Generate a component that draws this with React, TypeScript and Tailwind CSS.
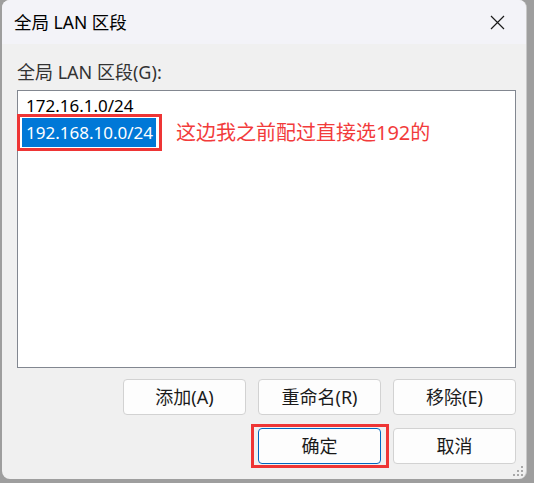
import React from "react";

const font = { fontFamily: '"Noto Sans", "Noto Sans CJK SC", sans-serif' };

function Btn({ children, primary }: { children: React.ReactNode; primary?: boolean }) {
  return (
    <div
      className={
        "w-[123px] h-[36px] flex items-center justify-center rounded-[4px] bg-[#fdfdfd] text-[18px] text-[#1a1a1a] " +
        (primary ? "border border-[#0067c0]" : "border border-[#d2d2d2]")
      }
    >
      {children}
    </div>
  );
}

export default function App() {
  return (
    <div className="w-[534px] h-[483px] bg-[#9e9e9e] overflow-hidden" style={font}>
      <div className="relative ml-[2px] w-[525px] h-[479px] rounded-[8px] overflow-hidden bg-[#f0f0f0] flex flex-col border-r border-[#c8c8c8]">
        <div className="h-[44px] shrink-0 bg-[#f3f3f8] flex items-center justify-between pl-[12px] pr-[21px]">
          <span className="text-[17.5px] text-black">全局 LAN 区段</span>
          <svg width="15" height="15" viewBox="0 0 15 15">
            <path d="M1 1 L14 14 M14 1 L1 14" stroke="#1a1a1a" strokeWidth="1.2" />
          </svg>
        </div>
        <div className="flex-1 flex flex-col pl-[15px] pr-[10px]">
          <div className="mt-[17px] text-[18px] text-[#333] leading-[23px]">全局 LAN 区段(G):</div>
          <div className="mt-[6px] h-[278px] bg-white border border-[#828790] flex flex-col pt-[3px]">
            <div className="pl-[8px] h-[24px] text-[17px] leading-[24px] text-black">172.16.1.0/24</div>
            <div className="flex items-center">
              <div className="relative ml-[4px]">
                <div className="bg-[#0078d7] text-white text-[17px] leading-[29px] h-[29px] pl-[4px] pr-[3px]">192.168.10.0/24</div>
                <div className="absolute left-[-5px] right-[-6px] top-[-4px] bottom-[-4px] border-[3px] border-[#ee3535]"></div>
              </div>
              <span className="ml-[20px] text-[20px] leading-[28px] text-[#f23b3b]">这边我之前配过直接选192的</span>
            </div>
          </div>
          <div className="mt-[11px] flex justify-end gap-[12px]">
            <Btn>添加(A)</Btn>
            <Btn>重命名(R)</Btn>
            <Btn>移除(E)</Btn>
          </div>
          <div className="mt-[13px] flex justify-end gap-[12px]">
            <div className="relative">
              <Btn primary>确定</Btn>
              <div className="absolute left-[-7px] right-[-8px] top-[-4px] bottom-[-4px] border-[3px] border-[#ee3535]"></div>
            </div>
            <Btn>取消</Btn>
          </div>
        </div>
        <svg className="absolute right-[3px] bottom-[3px]" width="10" height="10" viewBox="0 0 10 10">
          <rect x="8" y="0" width="2" height="2" fill="#a8a8a8" />
          <rect x="4" y="4" width="2" height="2" fill="#a8a8a8" />
          <rect x="8" y="4" width="2" height="2" fill="#a8a8a8" />
          <rect x="0" y="8" width="2" height="2" fill="#a8a8a8" />
          <rect x="4" y="8" width="2" height="2" fill="#a8a8a8" />
          <rect x="8" y="8" width="2" height="2" fill="#a8a8a8" />
        </svg>
      </div>
    </div>
  );
}
